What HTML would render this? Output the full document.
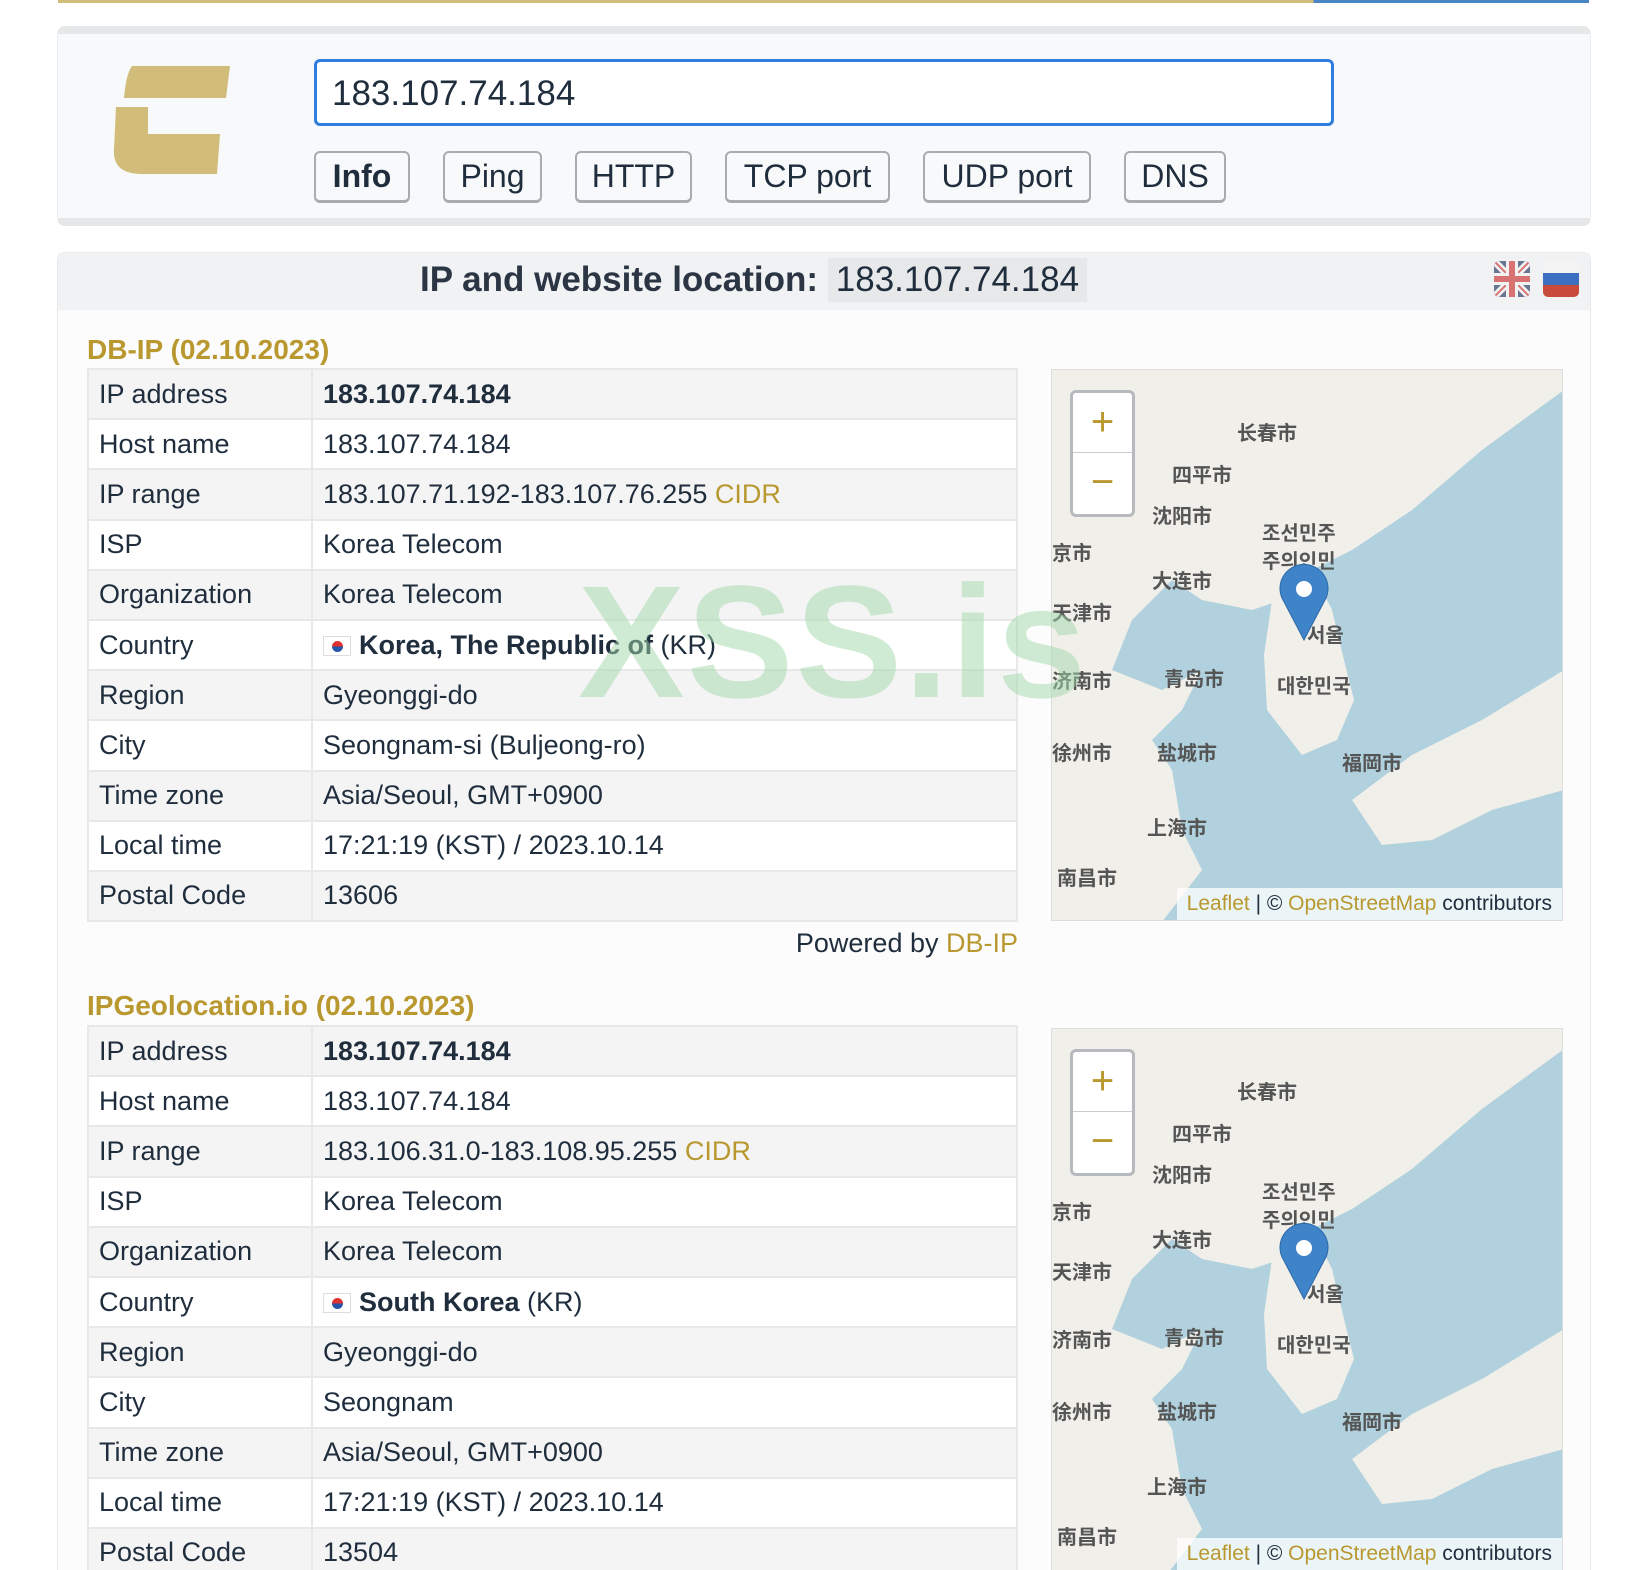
<!DOCTYPE html>
<html><head><meta charset="utf-8">
<style>
*{box-sizing:border-box;margin:0;padding:0}
html,body{width:1640px;height:1570px;overflow:hidden}
body{background:#fff;font-family:"Liberation Sans","Noto Sans CJK SC",sans-serif;color:#1f2d3d;position:relative}
.abs{position:absolute}
.topbar{left:58px;top:0;width:1531px;height:3px;background:linear-gradient(90deg,#d1bd79 0,#d1bd79 82%,#4a86c6 82%)}
.panel1{left:57px;top:26px;width:1534px;height:200px;background:#f8f9fa;border-top:8px solid #e6e7e8;border-bottom:8px solid #e6e7e8;border-radius:8px;border-left:1px solid #eee;border-right:1px solid #eee}
.input{left:314px;top:59px;width:1020px;height:67px;border:3px solid #2f7de1;border-radius:6px;background:#fff;font-size:35px;padding:12px 0 0 15px;color:#1f2d3d}
.btn{top:151px;height:52px;border:2px solid #a9abaf;border-bottom-width:3px;border-radius:6px;background:#f8f9fa;font-size:32px;text-align:center;line-height:47px;color:#1f2d3d}
.panel2{left:57px;top:252px;width:1534px;height:1318px;background:#fcfcfc;border:1px solid #e8e8e8;border-bottom:none;border-radius:8px 8px 0 0}
.head{left:58px;top:253px;width:1532px;height:57px;background:#f1f2f3}
.title{top:258px;left:420px;font-size:35px;font-weight:bold;color:#2b3544;line-height:44px}
.ipbox{background:#e7e8ea;padding:0 8px;font-weight:normal;color:#1f2d3d;display:inline-block}
h2{position:absolute;left:87px;font-size:28px;color:#b8982f;font-weight:bold}
table{position:absolute;left:87px;width:931px;border-collapse:collapse;font-size:27px}
td{height:50.2px;border:2px solid #e8e8e8;padding:0 10px;vertical-align:middle}
td:first-child{width:224px}
tr:nth-child(odd){background:#f4f4f4}
tr:nth-child(even){background:#fff}
.gold{color:#b8982f}
.flag{display:inline-block;width:28px;height:20px;background:#fff;border:1px solid #ddd;vertical-align:-2px;margin-right:8px;position:relative}
.flag:after{content:"";position:absolute;left:8px;top:4px;width:11px;height:11px;border-radius:50%;background:linear-gradient(#d33 50%,#2356a8 50%)}
.map{position:absolute;left:1051px;width:512px;height:552px;overflow:hidden;border:1px solid #ddd}
.zoom{position:absolute;left:18px;top:20px;width:65px;height:127px;border:3px solid #b6b9bd;border-radius:6px;background:#fff}
.zoom div{height:60px;text-align:center;font-size:40px;color:#b8982f;line-height:58px}
.zoom div:first-child{border-bottom:1px solid #ccc}
.attr{position:absolute;right:0;bottom:0;background:rgba(255,255,255,.75);font-size:21px;padding:4px 10px;color:#1f2d3d}
.wm{left:578px;top:550px;font-size:160px;font-weight:bold;color:rgba(160,215,170,.5);letter-spacing:2px;pointer-events:none}
</style></head><body>
<div class="abs topbar"></div>
<div class="abs panel1"></div>
<svg class="abs" style="left:112px;top:64px" width="122" height="112" viewBox="0 0 122 112"><path d="M20 2 L118 2 L114 34 L12 34 Q14 10 20 2Z M4 43 L36 43 L36 70 L108 70 L105 110 L30 110 Q0 110 2 85Z" fill="#d1bd79"/></svg>
<div class="abs input">183.107.74.184</div>
<div class="abs btn" style="left:314px;width:96px;font-weight:bold">Info</div>
<div class="abs btn" style="left:443px;width:99px">Ping</div>
<div class="abs btn" style="left:575px;width:117px">HTTP</div>
<div class="abs btn" style="left:725px;width:165px">TCP port</div>
<div class="abs btn" style="left:923px;width:168px">UDP port</div>
<div class="abs btn" style="left:1124px;width:102px">DNS</div>

<div class="abs panel2"></div>
<div class="abs head"></div>
<div class="abs title">IP and website location: <span class="ipbox">183.107.74.184</span></div>
<svg class="abs" style="left:1494px;top:261px" width="88" height="36"><defs><clipPath id="r"><rect width="36" height="36" rx="5"/></clipPath></defs>
<g clip-path="url(#r)"><rect width="36" height="36" fill="#3a4a6a"/><path d="M0 0L36 36M36 0L0 36" stroke="#eee" stroke-width="7"/><path d="M0 0L36 36M36 0L0 36" stroke="#c44" stroke-width="2"/><rect x="12" width="12" height="36" fill="#eee"/><rect y="12" width="36" height="12" fill="#eee"/><rect x="15" width="6" height="36" fill="#c44"/><rect y="15" width="36" height="6" fill="#c44"/><rect width="36" height="36" fill="#fff" opacity=".25"/></g>
<g transform="translate(49 0)" clip-path="url(#r)"><rect width="36" height="12" fill="#f4f4f4"/><rect y="12" width="36" height="12" fill="#3c6fc0"/><rect y="24" width="36" height="12" fill="#c84a3a"/></g></svg>

<h2 style="top:334px">DB-IP (02.10.2023)</h2>
<table style="top:368px">
<tr><td>IP address</td><td><b>183.107.74.184</b></td></tr>
<tr><td>Host name</td><td>183.107.74.184</td></tr>
<tr><td>IP range</td><td>183.107.71.192-183.107.76.255 <span class="gold">CIDR</span></td></tr>
<tr><td>ISP</td><td>Korea Telecom</td></tr>
<tr><td>Organization</td><td>Korea Telecom</td></tr>
<tr><td>Country</td><td><span class="flag"></span><b>Korea, The Republic of</b> (KR)</td></tr>
<tr><td>Region</td><td>Gyeonggi-do</td></tr>
<tr><td>City</td><td>Seongnam-si (Buljeong-ro)</td></tr>
<tr><td>Time zone</td><td>Asia/Seoul, GMT+0900</td></tr>
<tr><td>Local time</td><td>17:21:19 (KST) / 2023.10.14</td></tr>
<tr><td>Postal Code</td><td>13606</td></tr>
</table>
<div class="abs" style="right:622px;top:928px;font-size:27px">Powered by <span class="gold">DB-IP</span></div>

<h2 style="top:990px">IPGeolocation.io (02.10.2023)</h2>
<table style="top:1025px">
<tr><td>IP address</td><td><b>183.107.74.184</b></td></tr>
<tr><td>Host name</td><td>183.107.74.184</td></tr>
<tr><td>IP range</td><td>183.106.31.0-183.108.95.255 <span class="gold">CIDR</span></td></tr>
<tr><td>ISP</td><td>Korea Telecom</td></tr>
<tr><td>Organization</td><td>Korea Telecom</td></tr>
<tr><td>Country</td><td><span class="flag"></span><b>South Korea</b> (KR)</td></tr>
<tr><td>Region</td><td>Gyeonggi-do</td></tr>
<tr><td>City</td><td>Seongnam</td></tr>
<tr><td>Time zone</td><td>Asia/Seoul, GMT+0900</td></tr>
<tr><td>Local time</td><td>17:21:19 (KST) / 2023.10.14</td></tr>
<tr><td>Postal Code</td><td>13504</td></tr>
</table>

<div class="map" style="top:369px">
<svg width="512" height="552" style="position:absolute;left:0;top:0"><rect width="512" height="552" fill="#b0d1dd"/>
<path d="M0 0L512 0L512 20L430 80L360 140L300 180L260 200L230 230L200 240L150 230L120 210L80 250L60 300L110 320L150 300L130 340L100 370L120 400L130 460L150 500L110 552L0 552Z" fill="#f1efe9"/>
<path d="M220 230L260 200L280 240L292 290L302 330L285 370L250 385L215 340L212 285Z" fill="#f1efe9"/>
<path d="M300 430L360 385L430 350L512 300L512 420L440 440L380 470L330 475Z" fill="#f1efe9"/>
<g font-size="20" fill="#555" font-weight="bold"><text x="185" y="70">长春市</text><text x="120" y="112">四平市</text><text x="100" y="153">沈阳市</text><text x="0" y="190">京市</text><text x="100" y="218">大连市</text><text x="0" y="250">天津市</text><text x="0" y="318">济南市</text><text x="112" y="316">青岛市</text><text x="0" y="390">徐州市</text><text x="105" y="390">盐城市</text><text x="95" y="465">上海市</text><text x="5" y="515">南昌市</text><text x="290" y="400">福岡市</text><text x="210" y="170">조선민주</text><text x="210" y="198">주의인민</text><text x="255" y="272">서울</text><text x="225" y="323">대한민국</text></g>
<path d="M252 270L230 228A24 24 0 1 1 274 228Z" fill="#3f83c9" stroke="#2d69a8"/><circle cx="252" cy="219" r="8" fill="#fff"/></svg>
<div class="zoom"><div>+</div><div>−</div></div>
<div class="attr"><span class="gold">Leaflet</span> | © <span class="gold">OpenStreetMap</span> contributors</div>
</div>
<div class="map" style="top:1028px;height:542px;border-bottom:none">
<svg width="512" height="552" style="position:absolute;left:0;top:0"><rect width="512" height="552" fill="#b0d1dd"/>
<path d="M0 0L512 0L512 20L430 80L360 140L300 180L260 200L230 230L200 240L150 230L120 210L80 250L60 300L110 320L150 300L130 340L100 370L120 400L130 460L150 500L110 552L0 552Z" fill="#f1efe9"/>
<path d="M220 230L260 200L280 240L292 290L302 330L285 370L250 385L215 340L212 285Z" fill="#f1efe9"/>
<path d="M300 430L360 385L430 350L512 300L512 420L440 440L380 470L330 475Z" fill="#f1efe9"/>
<g font-size="20" fill="#555" font-weight="bold"><text x="185" y="70">长春市</text><text x="120" y="112">四平市</text><text x="100" y="153">沈阳市</text><text x="0" y="190">京市</text><text x="100" y="218">大连市</text><text x="0" y="250">天津市</text><text x="0" y="318">济南市</text><text x="112" y="316">青岛市</text><text x="0" y="390">徐州市</text><text x="105" y="390">盐城市</text><text x="95" y="465">上海市</text><text x="5" y="515">南昌市</text><text x="290" y="400">福岡市</text><text x="210" y="170">조선민주</text><text x="210" y="198">주의인민</text><text x="255" y="272">서울</text><text x="225" y="323">대한민국</text></g>
<path d="M252 270L230 228A24 24 0 1 1 274 228Z" fill="#3f83c9" stroke="#2d69a8"/><circle cx="252" cy="219" r="8" fill="#fff"/></svg>
<div class="zoom"><div>+</div><div>−</div></div>
<div class="attr"><span class="gold">Leaflet</span> | © <span class="gold">OpenStreetMap</span> contributors</div>
</div>
<div class="abs wm">XSS.is</div>
</body></html>
